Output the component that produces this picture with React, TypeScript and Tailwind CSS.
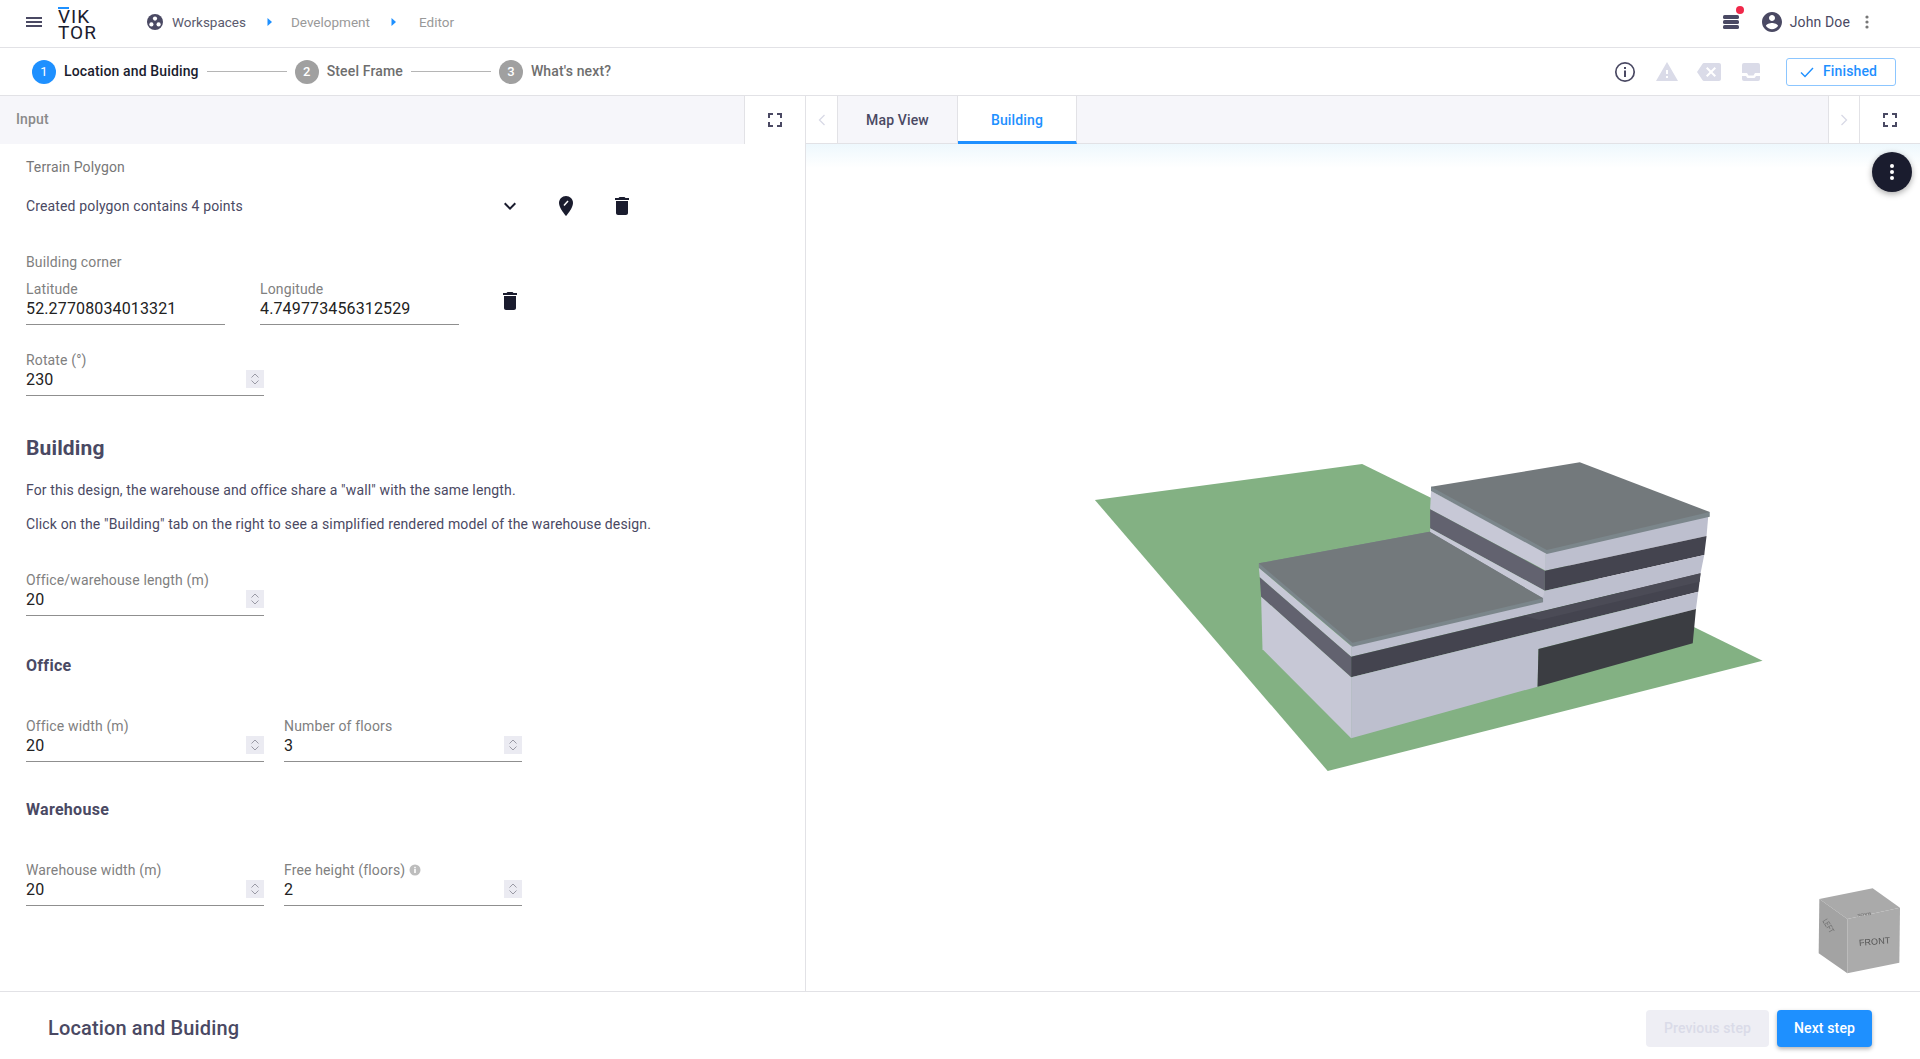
import { FC, ReactNode } from "react";

const Mui: FC<{ d: string; className?: string; size?: number }> = ({ d, className, size = 24 }) => (
  <svg width={size} height={size} viewBox="0 0 24 24" fill="currentColor" className={className}>
    <path d={d} />
  </svg>
);

const TRASH = "M6 19c0 1.1.9 2 2 2h8c1.1 0 2-.9 2-2V7H6v12zM19 4h-3.5l-1-1h-5l-1 1H5v2h14V4z";
const CHEVRON = "M16.59 8.59L12 13.17 7.41 8.59 6 10l6 6 6-6z";
const FULLSCREEN = "M7 14H5v5h5v-2H7v-3zm-2-4h2V7h3V5H5v5zm12 7h-3v2h5v-5h-2v3zM14 5v2h3v3h2V5h-5z";
const ACCOUNT =
  "M12 2C6.48 2 2 6.48 2 12s4.48 10 10 10 10-4.48 10-10S17.52 2 12 2zm0 3c1.66 0 3 1.34 3 3s-1.34 3-3 3-3-1.34-3-3 1.34-3 3-3zm0 14.2c-2.5 0-4.71-1.28-6-3.22.03-1.99 4-3.08 6-3.08 1.99 0 5.97 1.09 6 3.08-1.29 1.94-3.5 3.22-6 3.22z";
const WARNING = "M1 21h22L12 2 1 21zm12-3h-2v-2h2v2zm0-4h-2v-4h2v4z";
const BACKSPACE =
  "M22 3H7c-.69 0-1.23.35-1.59.88L0 12l5.41 8.11c.36.53.9.89 1.59.89h15c1.1 0 2-.9 2-2V5c0-1.1-.9-2-2-2zm-3 12.59L17.59 17 14 13.41 10.41 17 9 15.59 12.59 12 9 8.41 10.41 7 14 10.59 17.59 7 19 8.41 15.41 12 19 15.59z";

const Spinner = () => (
  <div className="mt-[2px] flex h-[18px] w-[18px] items-center justify-center bg-[#ebebf2]">
    <svg width="10" height="14" viewBox="0 0 10 14" fill="none" stroke="#9a9aa5" strokeWidth="1">
      <path d="M1.5 5.5L5 2l3.5 3.5M1.5 8.5L5 12l3.5-3.5" />
    </svg>
  </div>
);

const Field: FC<{ label: ReactNode; value: string; width: string; spin?: boolean }> = ({ label, value, width, spin }) => (
  <div className={width}>
    <div className="flex h-4 items-center text-[14px] leading-4 text-[#808080]">{label}</div>
    <div className="flex h-7 items-start justify-between border-b border-[#8f8f8f]">
      <span className="h-6 text-[16px] leading-6 text-[#222222]">{value}</span>
      {spin && <Spinner />}
    </div>
  </div>
);

const Step: FC<{ n: number; label: string; active?: boolean }> = ({ n, label, active }) => (
  <div className="flex items-center">
    <div
      className={
        active
          ? "flex h-6 w-6 items-center justify-center rounded-full bg-[#1e90ff] text-[13px] text-white"
          : "flex h-6 w-6 items-center justify-center rounded-full bg-[#a0a0a0] text-[13px] font-medium text-white"
      }
    >
      {n}
    </div>
    <span className={active ? "ml-2 text-[14px] font-medium text-[#1a1c2e]" : "ml-2 text-[14px] font-medium text-[#6e6e6e]"}>
      {label}
    </span>
  </div>
);

const Crumb = () => (
  <svg width="6" height="10" viewBox="0 0 6 10" fill="#1e90ff" className="shrink-0">
    <path d="M0.5 1l4.5 4-4.5 4z" />
  </svg>
);

const Building = () => (
  <svg
    width="720"
    height="350"
    viewBox="0 0 1568 1050"
    preserveAspectRatio="none"
    className="absolute left-[254px] top-[296px]"
  >
    <polygon points="76,180 658,72 1530,662 583,993" fill="#83b183" />
    {/* upper block, left side */}
    <polygon points="808,153 1058,335 1058,392 806,208" fill="#c7c8d6" />
    <polygon points="806,208 1056,392 1056,452 806,265" fill="#62626f" />
    <polygon points="806,265 1056,452 1056,495 1040,480 806,280" fill="#c7c8d6" />
    {/* right side */}
    <polygon points="1058,335 1412,225 1408,288 1056,392" fill="#bdbfce" />
    <polygon points="1056,392 1408,288 1403,345 1056,452" fill="#44444f" />
    <polygon points="1056,452 1403,345 1395,400 634,650 634,610 1052,470" fill="#bdbfce" />
    <polygon points="634,650 1395,400 1390,455 634,712" fill="#44444f" />
    <polygon points="1010,528 1395,400 1393,425 1045,540" fill="#4b4b56" />
    <polygon points="634,712 1390,455 1385,507 1042,627 1040,740 634,895" fill="#bdbfce" />
    <polygon points="1042,627 1385,507 1378,610 1040,740" fill="#3b3d42" />
    {/* lower block, left side */}
    <polygon points="433,383 634,618 634,650 435,412" fill="#c7c8d6" />
    <polygon points="435,412 634,650 634,712 438,470" fill="#62626f" />
    <polygon points="438,470 634,712 634,895 441,628" fill="#c7c8d6" />
    {/* roofs */}
    <polygon points="808,140 1415,216 1415,230 1060,342 808,153" fill="#7b868b" />
    <polygon points="808,140 1132,67 1415,216 1060,330" fill="#73797c" />
    <polygon points="433,370 805,275 1052,475 1052,487 637,620 433,383" fill="#7b868b" />
    <polygon points="433,370 805,275 1052,475 637,608" fill="#73797c" />
  </svg>
);

const Cube = () => (
  <svg width="140" height="120" viewBox="0 0 420 360" className="absolute left-[974px] top-[726px] blur-[0.6px]">
    <polygon points="118,87 278,55 360,113 202,147" fill="#aaaaaa" />
    <polygon points="118,87 202,147 202,310 116,250" fill="#a3a3a3" />
    <polygon points="202,147 360,113 358,278 202,310" fill="#ababab" />
    <text x="238" y="228" fontSize="27" fill="#555555" transform="rotate(-5 238 228)" fontFamily="Liberation Sans, sans-serif">
      FRONT
    </text>
    <text x="146" y="184" fontSize="24" fill="#6e6e6e" transform="rotate(58 146 184) scale(0.75 1)" fontFamily="Liberation Sans, sans-serif">
      LEFT
    </text>
    <text x="268" y="98" fontSize="15" fill="#666666" transform="rotate(172 268 98) scale(1 0.7)" fontFamily="Liberation Sans, sans-serif">
      BACK
    </text>
  </svg>
);

export default function App() {
  return (
    <div className="flex h-screen w-full flex-col overflow-hidden bg-white font-[Roboto,sans-serif] text-[14px] tracking-[0.14px] text-[#4a4963]">
      {/* top bar */}
      <header className="flex h-12 shrink-0 items-center border-b border-[#e2e2e6] pb-[3px] pl-[26px] pr-[51px]">
        <div className="flex h-[10px] w-4 flex-col justify-between">
          <div className="h-[2px] bg-[#4a4963]" />
          <div className="h-[2px] bg-[#4a4963]" />
          <div className="h-[2px] bg-[#4a4963]" />
        </div>
        <div className="relative ml-4 mt-[1px] h-[32px] w-[40px] text-[19px] font-normal leading-[15px] tracking-[1px] text-[#1a1c2e]">
          <div className="absolute left-0 top-0 h-[2px] w-[11px] bg-[#1e90ff]" />
          <div className="pt-[2px]">VIK</div>
          <div className="pt-[1px]">TOR</div>
        </div>
        <svg width="16" height="16" viewBox="0 0 16 16" className="ml-[49px] shrink-0">
          <circle cx="8" cy="8" r="8" fill="#4a4963" />
          <circle cx="8" cy="4.6" r="2.1" fill="#fff" />
          <circle cx="4.4" cy="10.4" r="2.1" fill="#fff" />
          <circle cx="11.6" cy="10.4" r="2.1" fill="#fff" />
        </svg>
        <span className="ml-[9px] text-[13.5px] tracking-normal text-[#5a5a6e]">Workspaces</span>
        <div className="ml-[21px]">
          <Crumb />
        </div>
        <span className="ml-[18px] text-[13.5px] tracking-normal text-[#999999]">Development</span>
        <div className="ml-[21px]">
          <Crumb />
        </div>
        <span className="ml-[22px] text-[13.5px] tracking-normal text-[#999999]">Editor</span>
        <div className="relative ml-auto h-5 w-5">
          <svg width="18" height="14" viewBox="0 0 18 14" className="absolute left-[-1px] top-[3px]" fill="#4a4963">
            <rect x="1" y="0" width="16" height="4" rx="1.6" />
            <rect x="1" y="5" width="16" height="4" rx="1.6" />
            <rect x="1" y="10" width="16" height="4" rx="1.6" />
          </svg>
          <div className="absolute left-[13px] top-[-6px] h-2 w-2 rounded-full bg-[#f0284a]" />
        </div>
        <Mui d={ACCOUNT} className="ml-[17px] text-[#4a4963]" />
        <span className="ml-[6px] text-[#4a4963]">John Doe</span>
        <svg width="4" height="14" viewBox="0 0 4 14" className="ml-[15px]" fill="#777777">
          <circle cx="2" cy="2" r="1.6" />
          <circle cx="2" cy="7" r="1.6" />
          <circle cx="2" cy="12" r="1.6" />
        </svg>
      </header>

      {/* steps */}
      <div className="flex h-12 shrink-0 items-center border-b border-[#e2e2e6] pl-8 pr-6">
        <Step n={1} label="Location and Buiding" active />
        <div className="mx-2 h-px w-20 bg-[#b5b5b5]" />
        <Step n={2} label="Steel Frame" />
        <div className="mx-2 h-px w-20 bg-[#b5b5b5]" />
        <Step n={3} label="What's next?" />
        <div className="ml-auto flex items-center">
          <svg width="22" height="22" viewBox="0 0 22 22" fill="none" className="text-[#4a4963]">
            <circle cx="11" cy="11" r="9.2" stroke="currentColor" strokeWidth="1.7" />
            <rect x="10" y="9.5" width="2" height="6.5" fill="currentColor" />
            <rect x="10" y="6" width="2" height="2" fill="currentColor" />
          </svg>
          <Mui d={WARNING} className="ml-[19px] text-[#dadbe8]" />
          <Mui d={BACKSPACE} className="ml-[18px] text-[#dadbe8]" />
          <svg width="18" height="18" viewBox="0 0 18 18" fill="#dadbe8" className="ml-[21px]">
            <path d="M2 0h14a2 2 0 0 1 2 2v8h-5l-1.5 2.5h-5L5 10H0V2a2 2 0 0 1 2-2z" />
            <path d="M0 13h4l1 1.5a1.5 1.5 0 0 0 1.2.6h5.6a1.5 1.5 0 0 0 1.2-.6L14 13h4v3a2 2 0 0 1-2 2H2a2 2 0 0 1-2-2z" />
          </svg>
          <button className="ml-[26px] flex h-7 w-[110px] items-center rounded-[3px] border border-[#8cc6ff] pl-[13px] font-medium text-[#1e90ff]">
            <svg width="14" height="12" viewBox="0 0 14 12" fill="none" stroke="#1e90ff" strokeWidth="1.4">
              <path d="M1 6.5l4 4L13 2" />
            </svg>
            <span className="ml-[9px]">Finished</span>
          </button>
        </div>
      </div>

      {/* main */}
      <div className="flex min-h-0 flex-1">
        <section className="flex w-[806px] shrink-0 flex-col border-r border-[#e2e2e6]">
          <div className="flex h-12 shrink-0">
            <div className="flex flex-1 items-center border-r border-[#e2e2e6] bg-[#f6f6fa] pb-[2px] pl-4 font-medium text-[#8a8a8a]">
              Input
            </div>
            <div className="flex w-[60px] items-center justify-center text-[#4a4963]">
              <Mui d={FULLSCREEN} />
            </div>
          </div>
          <div className="pl-[26px]">
            <div className="mt-[13px] h-5 leading-5 text-[#777777]">Terrain Polygon</div>
            <div className="mt-[9px] flex h-10 items-center">
              <span className="w-[472px] text-[#4a4963]">Created polygon contains 4 points</span>
              <Mui d={CHEVRON} className="text-[#1a1c2e]" />
              <svg width="24" height="24" viewBox="0 0 24 24" className="ml-8 text-[#1a1c2e]">
                <path fill="currentColor" d="M12 2C8.13 2 5 5.13 5 9c0 5.25 7 13 7 13s7-7.75 7-13c0-3.87-3.13-7-7-7z" />
                <path d="M10 11.5l4-4.5" stroke="#fff" strokeWidth="1.5" />
              </svg>
              <Mui d={TRASH} className="ml-8 text-[#1a1c2e]" />
            </div>
            <div className="mt-[26px] h-5 leading-5 text-[#808080]">Building corner</div>
            <div className="mt-[9px] flex items-start">
              <Field label="Latitude" value="52.27708034013321" width="w-[199px]" />
              <div className="ml-[35px]">
                <Field label="Longitude" value="4.749773456312529" width="w-[199px]" />
              </div>
              <Mui d={TRASH} className="ml-[39px] mt-2 text-[#1a1c2e]" />
            </div>
            <div className="mt-[27px]">
              <Field label="Rotate (°)" value="230" width="w-[238px]" spin />
            </div>
            <h2 className="mt-[38px] h-7 text-[21px] font-bold leading-7 text-[#4a4963]">Building</h2>
            <p className="mt-[18px] h-5 leading-5">For this design, the warehouse and office share a "wall" with the same length.</p>
            <p className="mt-[14px] h-5 leading-5">
              Click on the "Building" tab on the right to see a simplified rendered model of the warehouse design.
            </p>
            <div className="mt-[38px]">
              <Field label="Office/warehouse length (m)" value="20" width="w-[238px]" spin />
            </div>
            <h3 className="mt-[38px] h-6 text-[16px] font-bold leading-6 tracking-[0.3px] text-[#4a4963]">Office</h3>
            <div className="mt-10 flex gap-5">
              <Field label="Office width (m)" value="20" width="w-[238px]" spin />
              <Field label="Number of floors" value="3" width="w-[238px]" spin />
            </div>
            <h3 className="mt-9 h-6 text-[16px] font-bold leading-6 tracking-[0.3px] text-[#4a4963]">Warehouse</h3>
            <div className="mt-10 flex gap-5">
              <Field label="Warehouse width (m)" value="20" width="w-[238px]" spin />
              <Field
                label={
                  <>
                    Free height (floors)
                    <svg width="12" height="12" viewBox="0 0 12 12" className="ml-[4px]">
                      <circle cx="6" cy="6" r="5.5" fill="#bdbdbd" />
                      <rect x="5.2" y="5" width="1.6" height="4" fill="#fff" />
                      <rect x="5.2" y="2.8" width="1.6" height="1.5" fill="#fff" />
                    </svg>
                  </>
                }
                value="2"
                width="w-[238px]"
                spin
              />
            </div>
          </div>
        </section>

        <section className="flex min-w-0 flex-1 flex-col">
          <div className="flex h-12 shrink-0 border-b border-[#e2e2e6] bg-[#f6f6fa]">
            <div className="flex w-8 items-center justify-center border-r border-[#e2e2e6] bg-white text-[#d8d9e6]">
              <svg width="8" height="12" viewBox="0 0 8 12" fill="none" stroke="currentColor" strokeWidth="1.3">
                <path d="M6.5 1L1.5 6l5 5" />
              </svg>
            </div>
            <div className="flex w-[120px] items-center justify-center border-r border-[#e2e2e6] pt-[1px] font-medium text-[#4a4963]">
              Map View
            </div>
            <div className="-mb-px flex w-[119px] items-center justify-center border-r border-b-[3px] border-r-[#e2e2e6] border-b-[#1e90ff] bg-white pt-[3px] font-medium text-[#1e90ff]">
              Building
            </div>
            <div className="ml-auto flex w-8 items-center justify-center border-x border-[#e2e2e6] bg-white text-[#d8d9e6]">
              <svg width="8" height="12" viewBox="0 0 8 12" fill="none" stroke="currentColor" strokeWidth="1.3">
                <path d="M1.5 1l5 5-5 5" />
              </svg>
            </div>
            <div className="flex w-[60px] items-center justify-center bg-white text-[#4a4963]">
              <Mui d={FULLSCREEN} />
            </div>
          </div>
          <div className="relative flex-1">
            <div className="h-6 bg-linear-to-b from-[#eef8fd] to-white" />
            <Building />
            <Cube />
            <button className="absolute right-2 top-2 flex h-10 w-10 items-center justify-center rounded-full bg-[#1a1c2e] shadow-[0_2px_6px_rgba(0,0,0,0.35)]">
              <svg width="4" height="16" viewBox="0 0 4 16" fill="#fff">
                <circle cx="2" cy="2" r="2" />
                <circle cx="2" cy="8" r="2" />
                <circle cx="2" cy="14" r="2" />
              </svg>
            </button>
          </div>
        </section>
      </div>

      {/* footer */}
      <footer className="flex h-[68px] shrink-0 items-center border-t border-[#e2e2e6] pl-12 pr-12 pt-[5px]">
        <span className="text-[20px] font-medium text-[#4a4963]">Location and Buiding</span>
        <button className="ml-auto h-[37px] w-[123px] rounded-[4px] bg-[#eeeef4] font-medium text-[#dadbe8]">Previous step</button>
        <button className="ml-2 h-[37px] w-[95px] rounded-[4px] bg-[#1e90ff] font-medium text-white shadow-[0_2px_4px_rgba(0,0,0,0.3)]">
          Next step
        </button>
      </footer>
    </div>
  );
}
